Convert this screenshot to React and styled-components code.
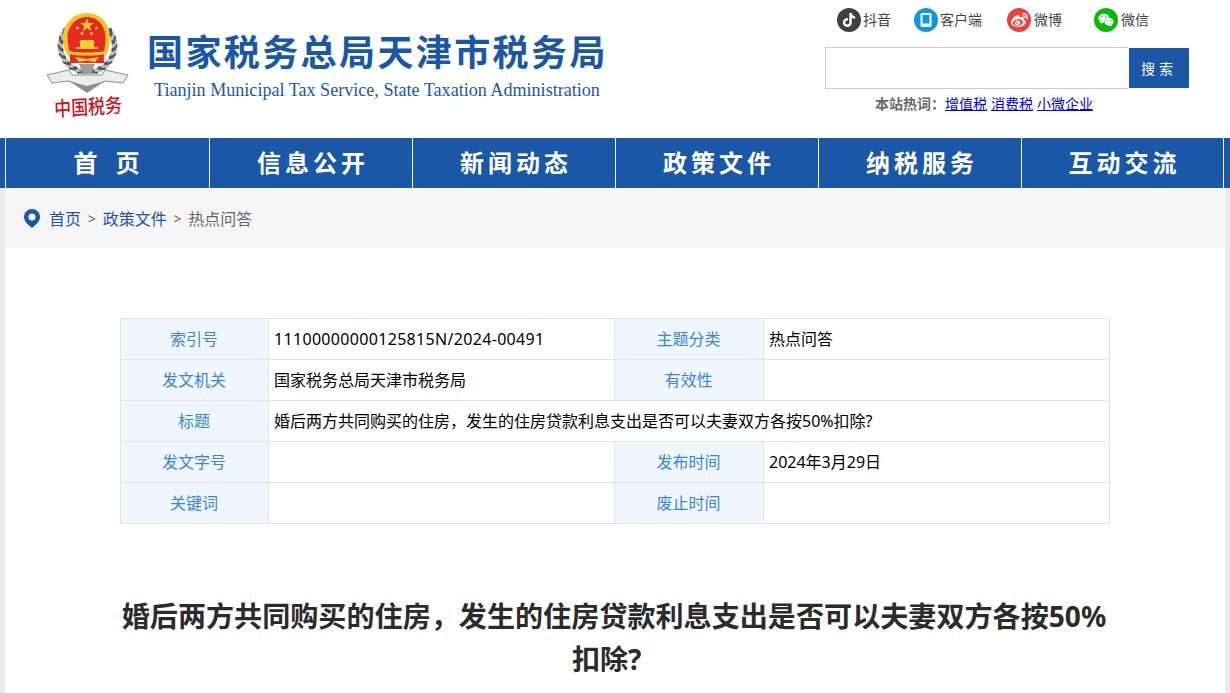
import React from 'react'
import styled, { createGlobalStyle } from 'styled-components'
import { FaTiktok, FaWeibo, FaWeixin } from 'react-icons/fa'

const GlobalStyle = createGlobalStyle`
  html, body {
    margin: 0;
    padding: 0;
    background: #ebebeb;
    font-family: "Noto Sans", "Noto Sans CJK SC", sans-serif;
  }
`

const Header = styled.header`
  height: 138px;
  background: #fff;
  display: flex;
  justify-content: space-between;
  padding: 0 41px 0 45px;
`

const Brand = styled.div`
  display: flex;
  align-items: flex-start;
`

const Emblem = styled.div`
  width: 85px;
  margin-top: 12px;
  display: flex;
  flex-direction: column;
  align-items: center;
`

const LogoText = styled.div`
  font-family: "Noto Sans CJK SC", serif;
  font-weight: 500;
  font-size: 17px;
  line-height: 22px;
  color: #c5181f;
  white-space: nowrap;
  transform: scaleY(1.2) rotate(-3deg);
`

const BrandText = styled.div`
  margin: 27px 0 0 17px;
`

const Title = styled.div`
  font-family: "Noto Sans CJK SC", sans-serif;
  font-size: 36px;
  line-height: 46px;
  font-weight: 700;
  letter-spacing: 2.4px;
  color: #1a57a6;
  white-space: nowrap;
`

const SubTitle = styled.div`
  font-family: "Liberation Serif", serif;
  font-size: 18.1px;
  line-height: 22px;
  color: #1a57a6;
  margin: 6px 0 0 7px;
  white-space: nowrap;
`

const Tools = styled.div`
  width: 364px;
  display: flex;
  flex-direction: column;
`

const Socials = styled.div`
  display: flex;
  margin: 8px 0 0 12px;
  height: 24px;
`

const Social = styled.div`
  display: flex;
  align-items: center;
  width: ${p => p.$w}px;
  font-size: 14px;
  line-height: 22px;
  color: #444;
`

const Round = styled.span`
  width: 24px;
  height: 24px;
  border-radius: 50%;
  background: ${p => p.$bg};
  color: #fff;
  display: flex;
  align-items: center;
  justify-content: center;
  margin-right: ${p => p.$gap || 2}px;
  flex: none;
`

const Search = styled.div`
  display: flex;
  margin-top: 16px;
  height: 40px;
`

const SearchInput = styled.input`
  box-sizing: border-box;
  width: 304px;
  height: 42px;
  margin-top: -1px;
  border: 1px solid #ccc;
  border-right: none;
  outline: none;
  background: #fff;
`

const SearchButton = styled.button`
  width: 60px;
  height: 40px;
  border: none;
  padding: 0;
  background: #1a57a6;
  color: #fff;
  font-family: inherit;
  font-size: 14px;
  letter-spacing: 4px;
`

const HotWords = styled.div`
  margin: 6px 0 0 50px;
  font-size: 14px;
  line-height: 20px;
  color: #666;
  display: flex;
  gap: 4px;
`

const HotLabel = styled.b`
  font-weight: 700;
  margin-right: -4px;
`

const HotLink = styled.a`
  color: #00e;
  text-decoration: underline;
`

const Nav = styled.nav`
  height: 50px;
  background: #1a57a6;
  padding: 0 5px;
  display: flex;
`

const NavItem = styled.a`
  box-sizing: border-box;
  width: ${p => (p.$first ? 204 : 203)}px;
  padding-left: 4px;
  border-left: 1px solid #fff;
  border-right: ${p => (p.$last ? '1px solid #fff' : 'none')};
  color: #fff;
  font-size: 24px;
  font-weight: 700;
  letter-spacing: ${p => (p.$first ? 6 : 4)}px;
  line-height: 50px;
  text-align: center;
  white-space: nowrap;
`

const Main = styled.main`
  margin: 0 5px;
  background: #fff;
  padding-bottom: 200px;
`

const Crumbs = styled.div`
  height: 60px;
  background: #f6f6f6;
  display: flex;
  align-items: center;
  padding-left: 19px;
  font-size: 16px;
  color: #666;
`

const Pin = styled.svg`
  width: 16px;
  height: 19px;
  margin-right: 9px;
`

const CrumbLink = styled.a`
  color: #1a57a6;
`

const CrumbSep = styled.span`
  font-size: 14px;
  margin: 0 6.8px;
  color: #666;
`

const InfoTable = styled.table`
  width: 989px;
  margin: 70px 0 0 115px;
  border-collapse: collapse;
  table-layout: fixed;
  font-size: 16px;
  color: #000;
`

const Label = styled.td`
  height: 38px;
  padding: 0 1px 2px 0;
  border: 1px solid #e3e3e3;
  background: #f0f6fe;
  color: #3a86d6;
  text-align: center;
`

const Value = styled.td`
  height: 38px;
  padding: 0 0 ${p => (p.$tracked ? 0 : 2)}px 5px;
  border: 1px solid #e3e3e3;
  letter-spacing: ${p => (p.$tracked ? '0.32px' : '0')};
`

const Heading = styled.h1`
  width: 988px;
  margin: 71px 0 0 115px;
  font-size: 28.1px;
  line-height: 43px;
  font-weight: 700;
  color: #2b2b2b;
  text-align: center;
`

const navItems = ['首 页', '信息公开', '新闻动态', '政策文件', '纳税服务', '互动交流']

const leaves = Array.from({ length: 14 }, (_, i) => {
  const deg = 95 + i * 9
  const a = (deg * Math.PI) / 180
  return { x: 42.5 + 27 * Math.cos(a), y: 34 + 26 * Math.sin(a), r: deg + 60 }
})

const Wreath = () => (
  <g>
    {leaves.map((l, i) => (
      <g key={i}>
        <ellipse cx={l.x} cy={l.y} rx="4.5" ry="2" fill={i % 2 ? '#555a58' : '#b9bdbb'} transform={`rotate(${l.r} ${l.x} ${l.y})`} />
        <ellipse cx={85 - l.x} cy={l.y} rx="4.5" ry="2" fill={i % 2 ? '#555a58' : '#b9bdbb'} transform={`rotate(${-l.r} ${85 - l.x} ${l.y})`} />
      </g>
    ))}
  </g>
)

// 税徽：金边红底、天安门、麦穗和银色飘带
const TaxEmblem = () => (
  <svg width="85" height="83" viewBox="0 0 85 83">
    <Wreath />
    <path d="M42 1 C56 1 65 12 65 26 C65 36 62 42 59 46 L59 51 L25 51 L25 46 C21 42 18 36 18 26 C18 12 28 1 42 1 Z" fill="#f6c22e" />
    <path d="M42 5 C53 5 60.5 14 60.5 26 C60.5 34 58 40 59 51 L25 51 C26 40 22.5 34 22.5 26 C22.5 14 31 5 42 5 Z" fill="#e42a22" />
    <path d="M42 6 L43.7 11 L49 11 L44.7 14.2 L46.3 19.2 L42 16 L37.7 19.2 L39.3 14.2 L35 11 L40.3 11 Z" fill="#f8cc35" />
    <g fill="#f8cc35">
      <circle cx="32.5" cy="16" r="1.6" />
      <circle cx="51.5" cy="16" r="1.6" />
      <circle cx="37" cy="21.5" r="1.5" />
      <circle cx="46.5" cy="21.5" r="1.5" />
      <path d="M36 28 H48 L50 31 H34 Z" />
      <rect x="35" y="31" width="14" height="4" />
      <rect x="31" y="35" width="22" height="2" />
      <path d="M24 39 C33 41 51 41 60 39 L60 42 C51 44 33 44 24 42 Z" />
      <path d="M30 45 L42 47 L54 45 L50 50 L42 48.5 L34 50 Z" />
    </g>
    <path d="M2 63 L24 58 L27 63 L57 63 L60 58 L83 63 L78 71 L60 69 L42 78 L24 69 L7 71 Z" fill="#eceeed" stroke="#6f7472" strokeWidth="0.8" />
    <path d="M24 69 L42 74 L60 69 L42 81 Z" fill="#8d9290" />
    <path d="M34 52 H50 L46 62 H38 Z" fill="#9a9e9c" />
  </svg>
)

const TabletIcon = () => (
  <svg width="14" height="16" viewBox="0 0 14 16">
    <path d="M3 1 H11 A1.5 1.5 0 0 1 12.5 2.5 V13.5 A1.5 1.5 0 0 1 11 15 H3 A1.5 1.5 0 0 1 1.5 13.5 V2.5 A1.5 1.5 0 0 1 3 1 Z M3.5 3 V11.5 H10.5 V3 Z" fill="#fff" fillRule="evenodd" />
    <circle cx="7" cy="13.2" r="0.9" fill="#fff" />
  </svg>
)

export default function App() {
  return (
    <>
      <GlobalStyle />
      <Header>
        <Brand>
          <Emblem>
            <TaxEmblem />
            <LogoText>中国税务</LogoText>
          </Emblem>
          <BrandText>
            <Title>国家税务总局天津市税务局</Title>
            <SubTitle>Tianjin Municipal Tax Service, State Taxation Administration</SubTitle>
          </BrandText>
        </Brand>
        <Tools>
          <Socials>
            <Social $w={77}><Round $bg="#404040"><FaTiktok size={14} /></Round>抖音</Social>
            <Social $w={93}><Round $bg="#1296db"><TabletIcon /></Round>客户端</Social>
            <Social $w={87}><Round $bg="#ea4141" $gap={3}><FaWeibo size={17} /></Round>微博</Social>
            <Social $w={60}><Round $bg="#09bb07" $gap={3}><FaWeixin size={16} /></Round>微信</Social>
          </Socials>
          <Search>
            <SearchInput />
            <SearchButton>搜索</SearchButton>
          </Search>
          <HotWords>
            <HotLabel>本站热词：</HotLabel>
            <HotLink>增值税</HotLink>
            <HotLink>消费税</HotLink>
            <HotLink>小微企业</HotLink>
          </HotWords>
        </Tools>
      </Header>
      <Nav>
        {navItems.map((t, i) => (
          <NavItem key={t} $first={i === 0} $last={i === navItems.length - 1}>{t}</NavItem>
        ))}
      </Nav>
      <Main>
        <Crumbs>
          <Pin viewBox="0 0 16 19">
            <path d="M8 0 A8 8 0 0 1 16 8 C16 12 12 16 8 19 C4 16 0 12 0 8 A8 8 0 0 1 8 0 Z M8 4.5 A3.5 3.5 0 1 0 8 11.5 A3.5 3.5 0 1 0 8 4.5 Z" fill="#1a57a6" fillRule="evenodd" />
          </Pin>
          <CrumbLink>首页</CrumbLink>
          <CrumbSep>&gt;</CrumbSep>
          <CrumbLink>政策文件</CrumbLink>
          <CrumbSep>&gt;</CrumbSep>
          热点问答
        </Crumbs>
        <InfoTable>
          <colgroup>
            <col style={{ width: 148 }} />
            <col style={{ width: 346 }} />
            <col style={{ width: 149 }} />
            <col style={{ width: 346 }} />
          </colgroup>
          <tbody>
            <tr>
              <Label>索引号</Label>
              <Value $tracked>11100000000125815N/2024-00491</Value>
              <Label>主题分类</Label>
              <Value>热点问答</Value>
            </tr>
            <tr>
              <Label>发文机关</Label>
              <Value>国家税务总局天津市税务局</Value>
              <Label>有效性</Label>
              <Value />
            </tr>
            <tr>
              <Label>标题</Label>
              <Value colSpan={3}>婚后两方共同购买的住房，发生的住房贷款利息支出是否可以夫妻双方各按50%扣除?</Value>
            </tr>
            <tr>
              <Label>发文字号</Label>
              <Value />
              <Label>发布时间</Label>
              <Value>2024年3月29日</Value>
            </tr>
            <tr>
              <Label>关键词</Label>
              <Value />
              <Label>废止时间</Label>
              <Value />
            </tr>
          </tbody>
        </InfoTable>
        <Heading>婚后两方共同购买的住房，发生的住房贷款利息支出是否可以夫妻双方各按50%扣除?&nbsp;&nbsp;</Heading>
      </Main>
    </>
  )
}
